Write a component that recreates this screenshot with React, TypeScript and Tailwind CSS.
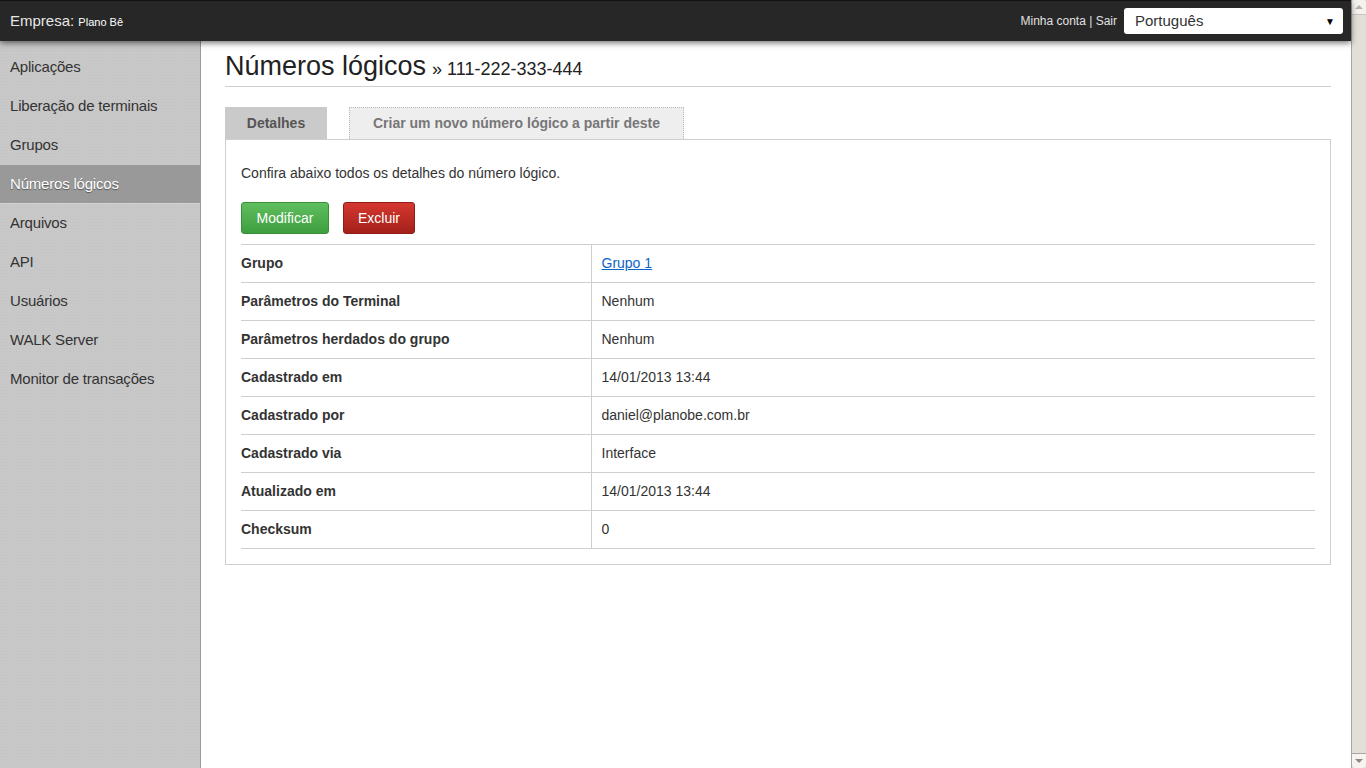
import React from "react";

const menu = [
  "Aplicações",
  "Liberação de terminais",
  "Grupos",
  "Números lógicos",
  "Arquivos",
  "API",
  "Usuários",
  "WALK Server",
  "Monitor de transações",
];

const rows: { label: string; value: string; link?: boolean }[] = [
  { label: "Grupo", value: "Grupo 1", link: true },
  { label: "Parâmetros do Terminal", value: "Nenhum" },
  { label: "Parâmetros herdados do grupo", value: "Nenhum" },
  { label: "Cadastrado em", value: "14/01/2013 13:44" },
  { label: "Cadastrado por", value: "daniel@planobe.com.br" },
  { label: "Cadastrado via", value: "Interface" },
  { label: "Atualizado em", value: "14/01/2013 13:44" },
  { label: "Checksum", value: "0" },
];

function Scrollbar() {
  return (
    <div className="w-[15px] h-screen flex flex-col bg-[#e2ded8] border-l border-[#a8a6a3]">
      <div className="h-[15px] flex items-center justify-center bg-[#f4f2ee] border-b border-[#c9c5bf] rounded-t-[3px]">
        <div className="w-0 h-0 border-l-[4px] border-r-[4px] border-b-[4px] border-l-transparent border-r-transparent border-b-[#b5b1ab]" />
      </div>
      <div className="flex-1" />
      <div className="h-[15px] flex items-center justify-center bg-[#f7f4ef] border-t border-[#a8a6a3] rounded-b-[4px]">
        <div className="w-0 h-0 border-l-[4px] border-r-[4px] border-t-[4px] border-l-transparent border-r-transparent border-t-[#8c8a87]" />
      </div>
    </div>
  );
}

export default function App() {
  return (
    <div className="flex h-screen overflow-hidden font-['Liberation_Sans',Arial,sans-serif] text-[#333]">
      <div className="flex-1 flex flex-col min-w-0">
        <header className="h-[41px] bg-[#272727] flex items-center justify-between pl-[10px] pr-[8px] relative z-10 shadow-[0_2px_6px_rgba(0,0,0,0.55)] border-t border-[#111]">
          <div className="text-[#e6e6e6] text-[15px]">
            Empresa: <span className="text-[11px] text-white">Plano Bê</span>
          </div>
          <div className="flex items-center gap-[7px]">
            <span className="text-[12px] text-[#e0e0e0]">Minha conta | Sair</span>
            <div className="w-[219px] h-[26px] bg-white rounded-[3px] flex items-center justify-between pl-[11px] pr-[8px] text-[15px] text-[#333]">
              <span>Português</span>
              <span className="text-[10px] text-black">▼</span>
            </div>
          </div>
        </header>
        <div className="flex flex-1 min-h-0">
          <aside className="w-[201px] bg-[#c8c8c8] bg-[radial-gradient(#c3c3c3_1px,transparent_1px)] bg-[length:3px_3px] border-r border-[#9a9a9a] pt-[7px]">
            {menu.map((m) => {
              const active = m === "Números lógicos";
              return (
                <div
                  key={m}
                  className={
                    active
                      ? "h-[39px] flex items-center pl-[10px] text-[15px] tracking-[-0.2px] bg-[#999] text-white [text-shadow:0_1px_1px_rgba(0,0,0,0.45)] border-b border-[#d4d4d4]"
                      : "h-[39px] flex items-center pl-[10px] text-[15px] tracking-[-0.2px] text-[#333]"
                  }
                >
                  {m}
                </div>
              );
            })}
          </aside>
          <main className="flex-1 bg-white px-[24px] pr-[20px]">
            <div className="pt-[9px] pb-[4px] border-b border-[#cfcfcf]">
              <h1 className="h-[32px] flex items-baseline leading-[32px]">
                <span className="text-[27px] text-[#222]">Números lógicos</span>
                <span className="text-[18px] text-[#222] ml-[6px]">» 111-222-333-444</span>
              </h1>
            </div>
            <div className="flex mt-[20px] gap-[22px]">
              <div className="w-[102px] h-[32px] bg-[#cacaca] flex items-center justify-center text-[14px] font-bold text-[#555]">
                Detalhes
              </div>
              <div className="w-[335px] h-[32px] bg-[#eee] border border-dotted border-b-0 border-[#bbb] flex items-center justify-center text-[14px] font-bold text-[#777]">
                Criar um novo número lógico a partir deste
              </div>
            </div>
            <section className="border border-[#cfcfcf] px-[15px] pt-[23px] pb-[15px]">
              <p className="text-[14px] leading-[20px] text-[#333]">Confira abaixo todos os detalhes do número lógico.</p>
              <div className="flex gap-[14px] mt-[19px]">
                <button className="w-[88px] h-[32px] rounded-[3px] text-[14px] text-white bg-gradient-to-b from-[#5fbf5f] to-[#3e9f3e] border border-[#3a8f3a]">
                  Modificar
                </button>
                <button className="w-[72px] h-[32px] rounded-[3px] text-[14px] text-white bg-gradient-to-b from-[#d4382f] to-[#a4201b] border border-[#8f1c17]">
                  Excluir
                </button>
              </div>
              <table className="w-full mt-[10px] border-collapse text-[14px]">
                <tbody>
                  {rows.map((r) => (
                    <tr key={r.label} className="border-t border-b border-[#cfcfcf] h-[38px]">
                      <td className="w-[350px] font-bold text-[#333] border-r border-[#cfcfcf]">{r.label}</td>
                      <td className="pl-[10px] text-[#333]">
                        {r.link ? <a className="text-[#0b64c8] underline" href="#">{r.value}</a> : r.value}
                      </td>
                    </tr>
                  ))}
                </tbody>
              </table>
            </section>
          </main>
        </div>
      </div>
      <Scrollbar />
    </div>
  );
}
